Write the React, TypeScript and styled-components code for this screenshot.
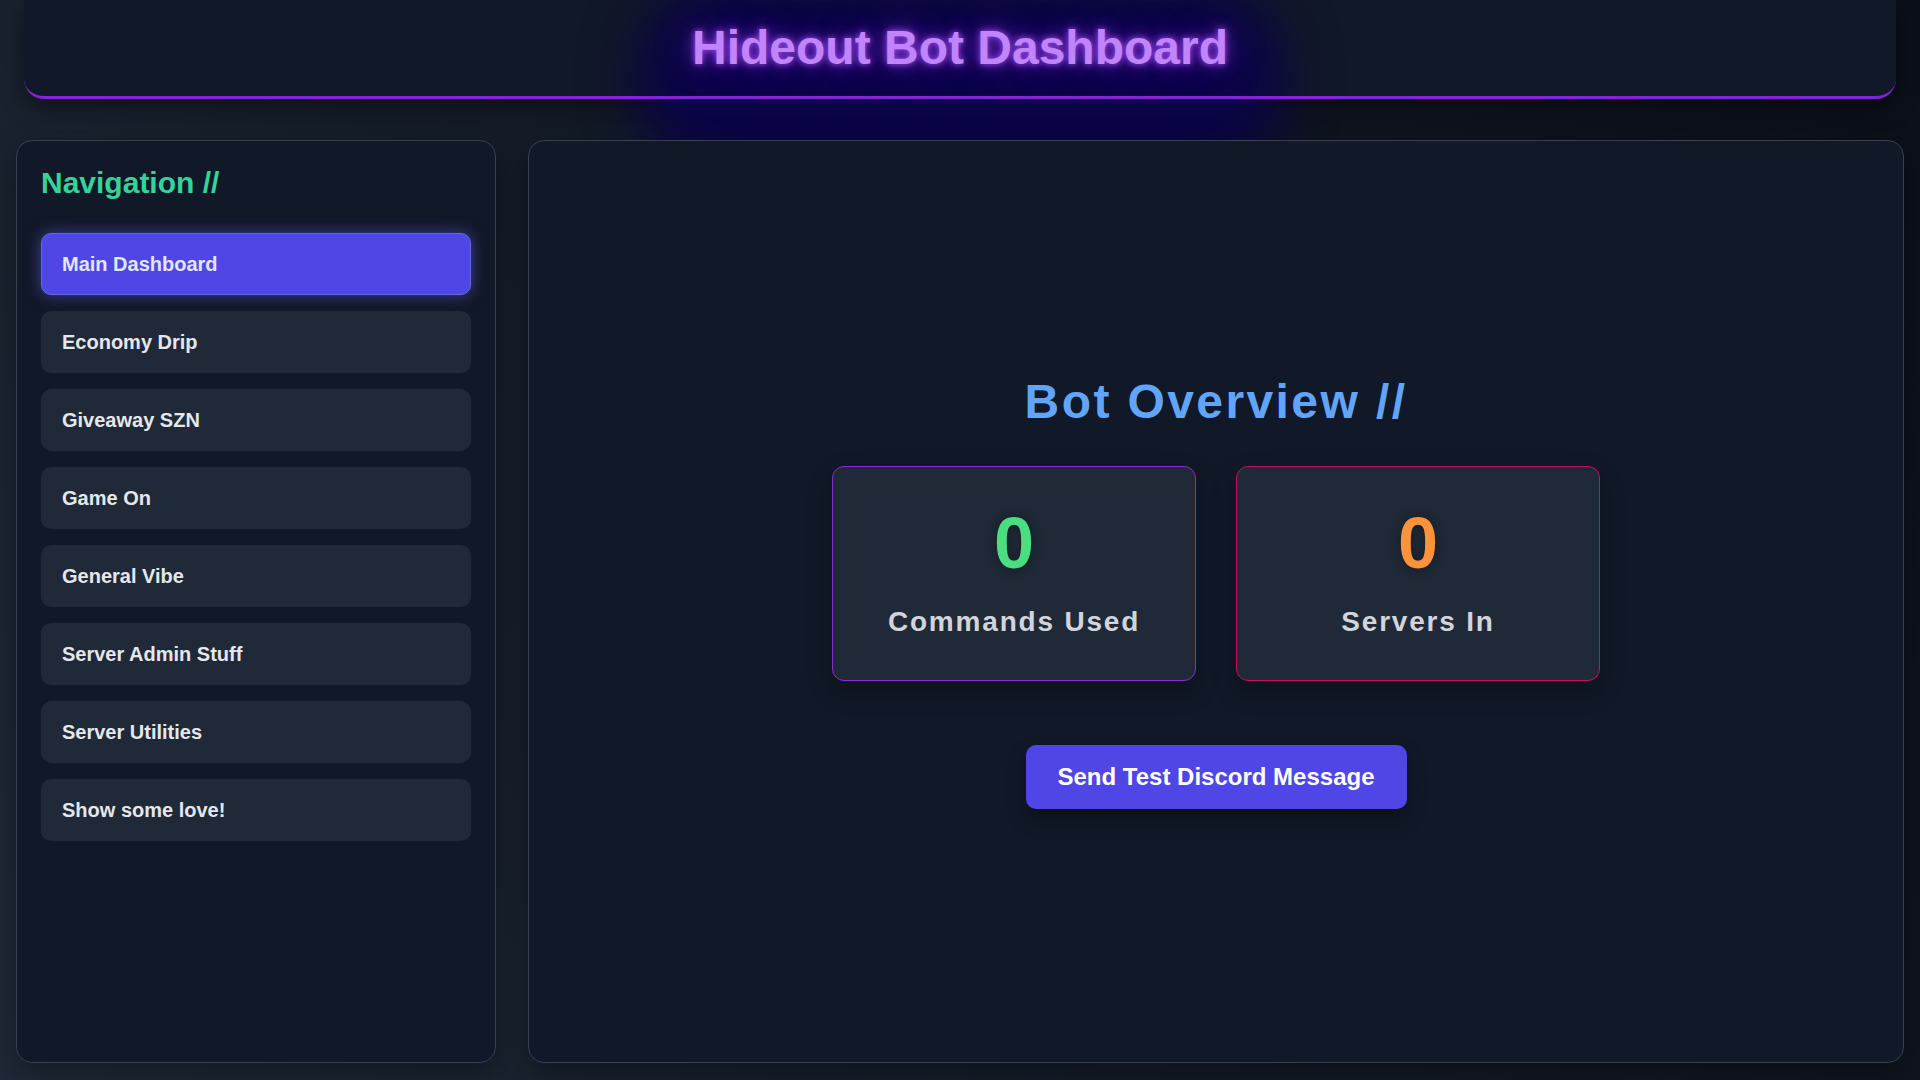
import { useState } from 'react';
import styled, { createGlobalStyle } from 'styled-components';

const GlobalStyle = createGlobalStyle`
  html, body {
    margin: 0;
    padding: 0;
  }

  body {
    background: linear-gradient(60deg, #1f2937 0%, #141b27 45%, #0b0f19 100%);
    font-family: 'Liberation Sans', Arial, Helvetica, sans-serif;
    color: #e5e7eb;
    overflow: hidden;
  }

  * {
    box-sizing: border-box;
  }
`;

const Page = styled.div`
  height: 100vh;
  display: flex;
  flex-direction: column;
  padding: 0 16px 17px;
`;

// bottom border is drawn by ::after so it stays on top of the title haze
const Header = styled.header`
  position: relative;
  margin: 0 8px;
  padding: 24px 24px 27px;
  background: #111827;
  border-radius: 0 0 20px 20px;
  box-shadow: 0 8px 24px rgba(0, 0, 0, 0.45);
  text-align: center;

  &::after {
    content: '';
    position: absolute;
    inset: 0;
    border-bottom: 3px solid #8424d4;
    border-radius: inherit;
    pointer-events: none;
    z-index: 2;
  }
`;

const Title = styled.h1`
  position: relative;
  z-index: 1;
  display: inline-block;
  margin: 0;
  font-size: 48px;
  line-height: 48px;
  font-weight: 700;
  color: #c084fc;
  text-shadow:
    0 0 6px rgba(168, 85, 247, 0.9),
    0 0 16px rgba(147, 51, 234, 0.7),
    0 0 34px rgba(110, 30, 220, 0.6);

  &::before {
    content: '';
    position: absolute;
    top: -40px;
    bottom: -100px;
    left: -58px;
    right: -58px;
    background: #0a0446;
    border-radius: 90px;
    filter: blur(26px);
    z-index: -1;
  }
`;

const Layout = styled.div`
  flex: 1;
  min-height: 0;
  margin-top: 41px;
  display: grid;
  grid-template-columns: 480px 1fr;
  gap: 32px;
`;

const Sidebar = styled.aside`
  position: relative;
  z-index: 3;
  background: #111827;
  border: 1px solid #374151;
  border-radius: 16px;
  padding: 24px;
  box-shadow: 0 10px 30px rgba(0, 0, 0, 0.35);
`;

const NavTitle = styled.h2`
  margin: 0 0 32px;
  font-size: 30px;
  line-height: 36px;
  font-weight: 700;
  color: #34d399;
`;

const NavList = styled.nav`
  display: flex;
  flex-direction: column;
  gap: 16px;
`;

const NavItem = styled.button<{ $active?: boolean }>`
  display: block;
  width: 100%;
  padding: 15px 20px;
  font-family: inherit;
  font-size: 20px;
  line-height: 30px;
  font-weight: 700;
  text-align: left;
  color: ${(p) => (p.$active ? '#e0e7ff' : '#e5e7eb')};
  background: ${(p) => (p.$active ? '#4f46e5' : '#1f2937')};
  border: 1px solid ${(p) => (p.$active ? '#6366f1' : 'transparent')};
  border-radius: 10px;
  box-shadow: ${(p) => (p.$active ? '0 0 16px rgba(99, 102, 241, 0.55)' : 'none')};
  cursor: pointer;
`;

const MainPanel = styled.main`
  position: relative;
  z-index: 3;
  background: #111827;
  border: 1px solid #374151;
  border-radius: 16px;
  padding: 24px 24px 40px;
  box-shadow: 0 10px 30px rgba(0, 0, 0, 0.35);
  display: flex;
  flex-direction: column;
  align-items: center;
  justify-content: center;
`;

const OverviewTitle = styled.h2`
  margin: 0 0 40px;
  font-size: 48px;
  line-height: 48px;
  font-weight: 700;
  letter-spacing: 0.05em;
  color: #60a5fa;
`;

const StatsRow = styled.div`
  display: flex;
  gap: 40px;
`;

const StatCard = styled.div<{ $border: string }>`
  width: 364px;
  padding: 40px 24px;
  background: #1f2937;
  border: 1px solid ${(p) => p.$border};
  border-radius: 12px;
  text-align: center;
  box-shadow: 0 10px 25px rgba(0, 0, 0, 0.3);
`;

const StatValue = styled.div<{ $color: string }>`
  font-size: 72px;
  line-height: 72px;
  font-weight: 700;
  color: ${(p) => p.$color};
  text-shadow: 0 0 12px rgba(0, 0, 0, 0.35);
`;

const StatLabel = styled.div`
  margin-top: 25px;
  font-size: 28px;
  line-height: 36px;
  font-weight: 700;
  letter-spacing: 1.8px;
  color: #d1d5db;
`;

const ActionButton = styled.button`
  margin-top: 64px;
  padding: 16px 32px;
  font-family: inherit;
  font-size: 24px;
  line-height: 32px;
  font-weight: 700;
  color: #ffffff;
  background: #4f46e5;
  border: none;
  border-radius: 10px;
  box-shadow: 0 10px 20px rgba(0, 0, 0, 0.3);
  cursor: pointer;
`;

const navItems = [
  'Main Dashboard',
  'Economy Drip',
  'Giveaway SZN',
  'Game On',
  'General Vibe',
  'Server Admin Stuff',
  'Server Utilities',
  'Show some love!',
];

export default function App() {
  const [active, setActive] = useState('Main Dashboard');
  const stats = [
    { label: 'Commands Used', value: 0, color: '#4ade80', border: '#8b2bd9' },
    { label: 'Servers In', value: 0, color: '#fb923c', border: '#c8115e' },
  ];

  return (
    <>
      <GlobalStyle />
      <Page>
        <Header>
          <Title>Hideout Bot Dashboard</Title>
        </Header>

        <Layout>
          <Sidebar>
            <NavTitle>Navigation //</NavTitle>
            <NavList>
              {navItems.map((item) => (
                <NavItem key={item} $active={item === active} onClick={() => setActive(item)}>
                  {item}
                </NavItem>
              ))}
            </NavList>
          </Sidebar>

          <MainPanel>
            <OverviewTitle>Bot Overview //</OverviewTitle>
            <StatsRow>
              {stats.map((stat) => (
                <StatCard key={stat.label} $border={stat.border}>
                  <StatValue $color={stat.color}>{stat.value}</StatValue>
                  <StatLabel>{stat.label}</StatLabel>
                </StatCard>
              ))}
            </StatsRow>
            <ActionButton>Send Test Discord Message</ActionButton>
          </MainPanel>
        </Layout>
      </Page>
    </>
  );
}
